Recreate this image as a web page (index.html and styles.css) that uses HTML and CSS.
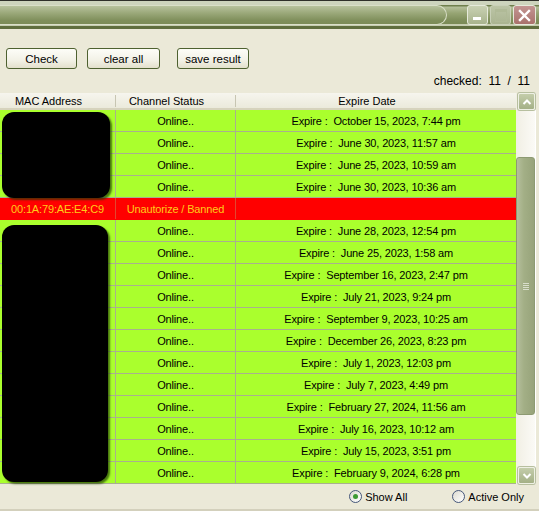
FILE: index.html
```html
<!DOCTYPE html>
<html>
<head>
    <title>MAC Checker</title>
    <link rel="stylesheet" href="styles.css">
</head>
<body>
    <div class="window">
        <!-- title bar -->
        <div class="titlebar">
            <div class="caption"></div>
            <div class="ctrls">
                <div class="ctrl min"><span></span></div>
                <div class="ctrl max"><span></span></div>
                <div class="ctrl close">
                    <svg width="13" height="13" viewBox="0 0 13 13"><path d="M2 2 L11 11 M11 2 L2 11" stroke="#fff" stroke-width="2.4" stroke-linecap="square"/></svg>
                </div>
            </div>
        </div>

        <div class="client">
            <div class="toolbar">
                <button class="btn btn-check">Check</button>
                <button class="btn btn-clear">clear all</button>
                <button class="btn btn-save">save result</button>
            </div>
            <div class="counter">checked:&nbsp; 11 &nbsp;/&nbsp; 11</div>

            <div class="list">
                <div class="grid">
                    <div class="head">
                        <div class="hcell">MAC Address</div>
                        <div class="hcell">Channel Status</div>
                        <div class="hcell">Expire Date</div>
                    </div>
                    <div class="row"><div class="cell"></div><div class="cell">Online..</div><div class="cell">Expire :&nbsp; October 15, 2023, 7:44 pm</div></div>
                    <div class="row"><div class="cell"></div><div class="cell">Online..</div><div class="cell">Expire :&nbsp; June 30, 2023, 11:57 am</div></div>
                    <div class="row"><div class="cell"></div><div class="cell">Online..</div><div class="cell">Expire :&nbsp; June 25, 2023, 10:59 am</div></div>
                    <div class="row"><div class="cell"></div><div class="cell">Online..</div><div class="cell">Expire :&nbsp; June 30, 2023, 10:36 am</div></div>
                    <div class="row banned"><div class="cell">00:1A:79:AE:E4:C9</div><div class="cell">Unautorize / Banned</div><div class="cell"></div></div>
                    <div class="row"><div class="cell"></div><div class="cell">Online..</div><div class="cell">Expire :&nbsp; June 28, 2023, 12:54 pm</div></div>
                    <div class="row"><div class="cell"></div><div class="cell">Online..</div><div class="cell">Expire :&nbsp; June 25, 2023, 1:58 am</div></div>
                    <div class="row"><div class="cell"></div><div class="cell">Online..</div><div class="cell">Expire :&nbsp; September 16, 2023, 2:47 pm</div></div>
                    <div class="row"><div class="cell"></div><div class="cell">Online..</div><div class="cell">Expire :&nbsp; July 21, 2023, 9:24 pm</div></div>
                    <div class="row"><div class="cell"></div><div class="cell">Online..</div><div class="cell">Expire :&nbsp; September 9, 2023, 10:25 am</div></div>
                    <div class="row"><div class="cell"></div><div class="cell">Online..</div><div class="cell">Expire :&nbsp; December 26, 2023, 8:23 pm</div></div>
                    <div class="row"><div class="cell"></div><div class="cell">Online..</div><div class="cell">Expire :&nbsp; July 1, 2023, 12:03 pm</div></div>
                    <div class="row"><div class="cell"></div><div class="cell">Online..</div><div class="cell">Expire :&nbsp; July 7, 2023, 4:49 pm</div></div>
                    <div class="row"><div class="cell"></div><div class="cell">Online..</div><div class="cell">Expire :&nbsp; February 27, 2024, 11:56 am</div></div>
                    <div class="row"><div class="cell"></div><div class="cell">Online..</div><div class="cell">Expire :&nbsp; July 16, 2023, 10:12 am</div></div>
                    <div class="row"><div class="cell"></div><div class="cell">Online..</div><div class="cell">Expire :&nbsp; July 15, 2023, 3:51 pm</div></div>
                    <div class="row"><div class="cell"></div><div class="cell">Online..</div><div class="cell">Expire :&nbsp; February 9, 2024, 6:28 pm</div></div>
                </div>

                <div class="scrollbar">
                    <div class="arrow">
                        <svg width="10" height="8" viewBox="0 0 10 8"><path d="M1.5 6 L5 2.5 L8.5 6" fill="none" stroke="#fff" stroke-width="2"/></svg>
                    </div>
                    <div class="track">
                        <div class="thumb"><span></span><span></span><span></span><span></span></div>
                    </div>
                    <div class="arrow">
                        <svg width="10" height="8" viewBox="0 0 10 8"><path d="M1.5 2 L5 5.5 L8.5 2" fill="none" stroke="#fff" stroke-width="2"/></svg>
                    </div>
                </div>

                <!-- blacked out MAC addresses -->
                <div class="mask mask-top"></div>
                <div class="mask mask-bottom"></div>
            </div>

            <div class="footer">
                <label class="radio"><span class="dot on"></span>Show All</label>
                <label class="radio"><span class="dot"></span>Active Only</label>
            </div>
        </div>
    </div>
</body>
</html>
```

FILE: styles.css
```css
/* window */
body {
    margin: 0;
    background-color: #ebe9d8;
    font-family: "Liberation Sans", Arial, sans-serif;
    font-size: 11px;
}
.window {
    width: 539px;
    height: 511px;
    overflow: hidden;
    background-color: #ebe9d8;
}
.titlebar {
    height: 29px;
    display: flex;
    align-items: flex-start;
    background: linear-gradient(to bottom, #2e302a 0, #2e302a 1px, #cdd4bd 1px, #cdd4bd 5px, #6f7f4d 5px, #6f7f4d 6px, #b4bf9a 7px, #97a574 13px, #7f8f5b 20px, #7a8a56 24px, #c6cdb0 24px, #c6cdb0 26px, #5f6e3e 26px, #5f6e3e 29px);
}
.caption {
    width: 446px;
    height: 18px;
    margin-top: 5px;
    border: 1px solid #d9dfc8;
    border-left: none;
    border-radius: 0 11px 11px 0;
    background: linear-gradient(to bottom, #b7c29d, #9aa879 40%, #7f8f5b 80%, #7b8b57);
}
.ctrls {
    display: flex;
    gap: 2px;
    margin-left: 20px;
    margin-top: 5px;
}
.ctrl {
    width: 19px;
    height: 18px;
    border: 1px solid #e6eadb;
    border-radius: 3px;
    position: relative;
    display: flex;
    align-items: center;
    justify-content: center;
}
.ctrl.min {
    background: linear-gradient(to bottom, #c9d1b3, #a8b38d);
}
.ctrl.min span {
    position: absolute;
    left: 5px;
    bottom: 4px;
    width: 8px;
    height: 3px;
    background-color: #fff;
}
.ctrl.max {
    background: linear-gradient(to bottom, #bcc5a6, #aab491);
    border-color: #c9d0b8;
}
.ctrl.max span {
    width: 10px;
    height: 9px;
    border: 1px solid #b0ba97;
    border-top-width: 3px;
}
.ctrl.close {
    width: 21px;
    background: linear-gradient(to bottom, #c39592, #a9726c);
}

/* toolbar */
.client {
    display: flex;
    flex-direction: column;
}
.toolbar {
    display: flex;
    padding: 19px 0 0 6px;
}
.btn {
    height: 21px;
    padding: 0;
    font-family: "Liberation Sans", Arial, sans-serif;
    font-size: 11.5px;
    color: #000;
    border: 1px solid #4e6130;
    border-radius: 3px;
    background: linear-gradient(to bottom, #fdfdf8, #f2f1e6 60%, #e3e0cc);
}
.btn-check { width: 71px; }
.btn-clear { width: 73px; margin-left: 10px; }
.btn-save { width: 72px; margin-left: 17px; }
.counter {
    height: 24px;
    display: flex;
    align-items: center;
    justify-content: flex-end;
    padding: 0 9px 0 0;
    font-size: 12px;
    white-space: pre;
}

/* list */
.list {
    position: relative;
    display: flex;
    width: 535px;
    height: 391px;
    border-right: 1px solid #fff;
}
.grid {
    width: 516px;
    display: flex;
    flex-direction: column;
}
.head {
    display: grid;
    grid-template-columns: 116px 120px 280px;
    height: 17px;
    box-sizing: border-box;
    background: linear-gradient(to bottom, #f6f5ee, #ebeadb);
    border-bottom: 2px solid #d6d3bd;
}
.hcell {
    display: flex;
    align-items: center;
    justify-content: center;
    padding-right: 18px;
    font-size: 11px;
    border-right: 1px solid #c7c5b2;
    margin: 2px 0;
}
.hcell:last-child { border-right: none; }
.row {
    display: grid;
    grid-template-columns: 116px 120px 280px;
    height: 22px;
    box-sizing: border-box;
    background-color: #aaff2d;
    border-bottom: 1px solid #a9b08e;
}
.cell {
    display: flex;
    align-items: center;
    justify-content: center;
    border-right: 1px solid #a9b08e;
    white-space: pre;
    letter-spacing: -0.15px;
}
.cell:last-child { border-right: none; }
.row.banned {
    background-color: #ff0000;
    color: #ffcb1a;
    border-bottom-color: #ff0000;
}
.row.banned .cell { border-right-color: #e04830; }

/* scrollbar */
.scrollbar {
    width: 19px;
    display: flex;
    flex-direction: column;
    background: linear-gradient(to right, #f1efe4, #fbfaf6);
}
.arrow {
    width: 15px;
    height: 15px;
    margin: 0 1px 0 2px;
    border: 1px solid #eef0e4;
    border-radius: 2px;
    display: flex;
    align-items: center;
    justify-content: center;
    background: linear-gradient(to bottom, #c4cdab, #a4b086);
    box-shadow: 0 0 0 1px #b7bf9f;
}
.track {
    flex: 1;
    padding-top: 47px;
    padding-bottom: 52px;
    display: flex;
    justify-content: center;
}
.thumb {
    width: 13px;
    flex: 1;
    border: 1px solid #8d9a72;
    border-radius: 3px;
    background: linear-gradient(to right, #b5bf9c, #a3af86 40%, #97a37a);
    display: flex;
    flex-direction: column;
    align-items: center;
    justify-content: center;
    gap: 1px;
}
.thumb span {
    width: 6px;
    height: 1px;
    background-color: #d8decb;
}

/* hidden MAC addresses */
.mask {
    position: absolute;
    left: 2px;
    background-color: #000;
    border-radius: 12px;
    box-shadow: 2px 2px 2px rgba(30, 60, 0, 0.7);
}
.mask-top {
    top: 19px;
    width: 108px;
    height: 86px;
}
.mask-bottom {
    top: 132px;
    width: 106px;
    height: 257px;
}

/* footer */
.footer {
    height: 25px;
    display: flex;
    align-items: center;
    justify-content: flex-end;
    gap: 45px;
    padding-right: 15px;
    font-size: 11px;
    border-bottom: 2px solid #d3d0bc;
}
.radio {
    display: flex;
    align-items: center;
    gap: 3px;
}
.dot {
    width: 11px;
    height: 11px;
    border: 1px solid #45577a;
    border-radius: 50%;
    background: linear-gradient(135deg, #dcdbd0, #fff);
    display: flex;
    align-items: center;
    justify-content: center;
}
.dot.on::after {
    content: "";
    width: 5px;
    height: 5px;
    border-radius: 50%;
    background-color: #3c9a32;
}
```
